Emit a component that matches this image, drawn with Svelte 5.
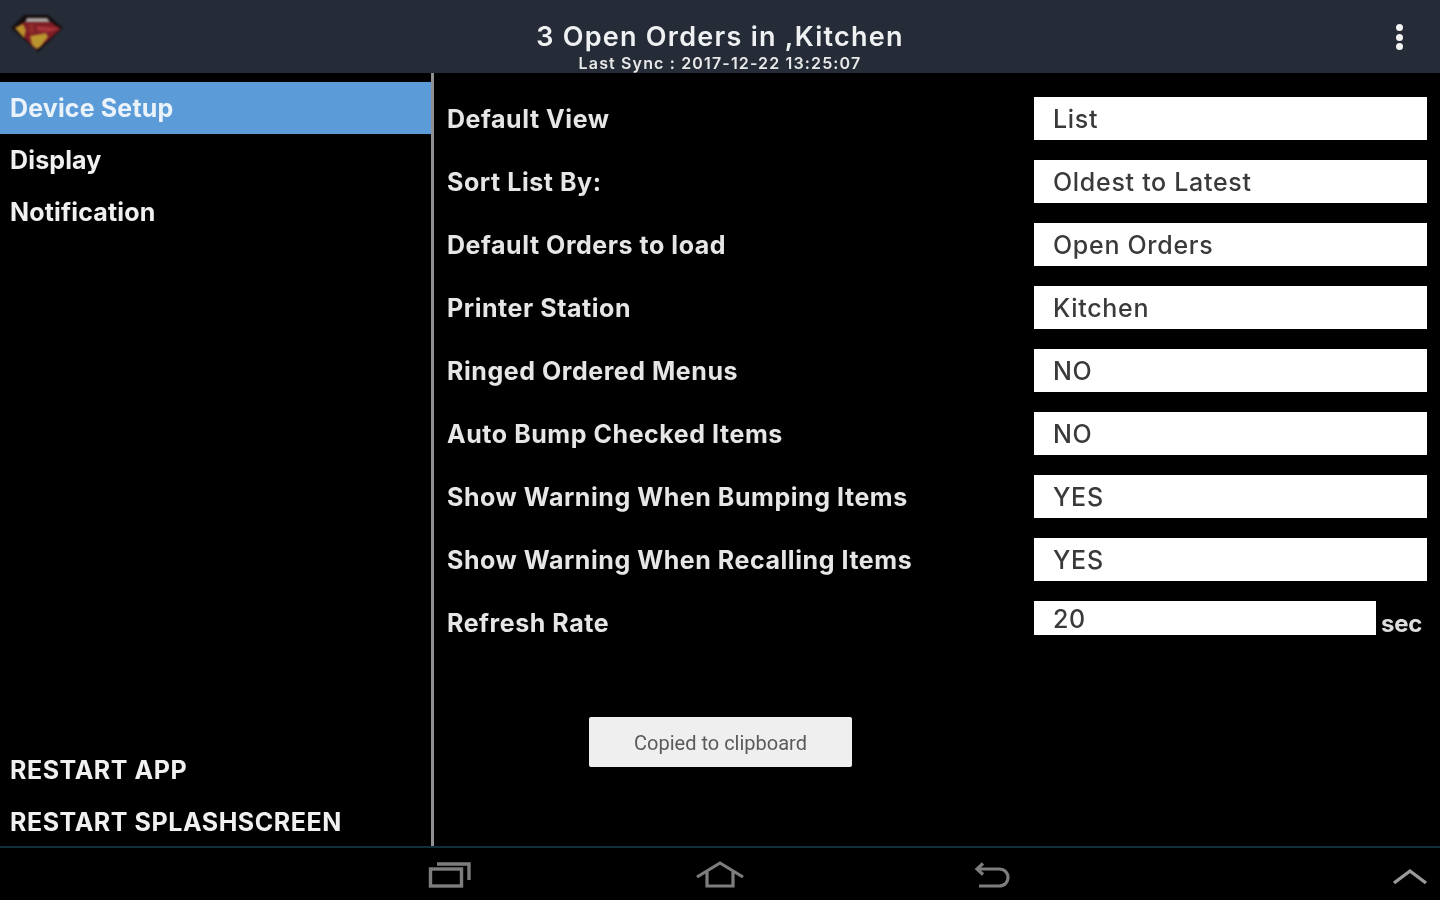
<script>
  const rows = [
    ['Default View', 'List'],
    ['Sort List By:', 'Oldest to Latest'],
    ['Default Orders to load', 'Open Orders'],
    ['Printer Station', 'Kitchen'],
    ['Ringed Ordered Menus', 'NO'],
    ['Auto Bump Checked Items', 'NO'],
    ['Show Warning When Bumping Items', 'YES'],
    ['Show Warning When Recalling Items', 'YES']
  ];
</script>

<div class="screen">
  <header class="top">
    <svg class="logo" width="54" height="40" viewBox="0 0 54 40">
      <path d="M14 2 L38 2 L53 15 L28 39 L1 15 Z" fill="#140d0e"/>
      <path d="M17 5 L37 5 L40 9 L15 10 Z" fill="#a9a3a0"/>
      <path d="M5 15 L14 9 L41 9 L51 16 L28 36 L25 36 Z" fill="#7c1d24"/>
      <path d="M5 15 L13 11 L16 17 L14 25 Z" fill="#b98f2c"/>
      <path d="M20 23 L36 20 L38 24 L31 33 L27 36 L22 32 Z" fill="#b99530"/>
      <path d="M27 13 L50 15 L40 19 L27 18 Z" fill="#a6333a"/>
      <path d="M18 11 L24 11 L24 21 L19 20 Z" fill="#8f2a2a"/>
    </svg>
    <div class="titles">
      <div class="title">3 Open Orders in ,Kitchen</div>
      <div class="sync">Last Sync : 2017-12-22 13:25:07</div>
    </div>
    <div class="dots"><i></i><i></i><i></i></div>
  </header>

  <main class="body">
    <aside class="side">
      <div class="group">
        <div class="item active">Device Setup</div>
        <div class="item">Display</div>
        <div class="item">Notification</div>
      </div>
      <div class="group lower">
        <div class="item caps">RESTART APP</div>
        <div class="item caps">RESTART SPLASHSCREEN</div>
      </div>
    </aside>
    <section class="content">
      {#each rows as r}
        <div class="row">
          <div class="label">{r[0]}</div>
          <div class="value">{r[1]}</div>
        </div>
      {/each}
      <div class="row">
        <div class="label">Refresh Rate</div>
        <div class="rate">
          <div class="value short">20</div>
          <span class="sec">sec</span>
        </div>
      </div>
    </section>
    <div class="toast">Copied to clipboard</div>
  </main>

  <nav class="nav">
    <svg class="ic recent" width="44" height="30" viewBox="0 0 44 30" fill="none" stroke="#7d7d7d" stroke-width="3.4">
      <rect x="2.5" y="10" width="31" height="17"/>
      <path d="M9 5 H41 V21"/>
    </svg>
    <svg class="ic home" width="50" height="30" viewBox="0 0 50 30" fill="none" stroke="#7d7d7d" stroke-width="3.2">
      <path d="M2 16 L25 2 L48 16"/>
      <path d="M12 11 V25 H38 V11"/>
    </svg>
    <svg class="ic back" width="38" height="30" viewBox="0 0 38 30" fill="none" stroke="#7d7d7d" stroke-width="3.2">
      <path d="M3 7 H25 C37 7 37 24 25 24 H5"/>
      <path d="M9 1.5 L3 7 L9 12.5" />
    </svg>
    <svg class="ic up" width="36" height="18" viewBox="0 0 36 18" fill="none" stroke="#9a9a9a" stroke-width="3.4">
      <path d="M2 15 L18 3 L34 15"/>
    </svg>
  </nav>
</div>

<style>
  :global(body) { margin: 0; background: #000; }
  .screen {
    width: 1440px;
    height: 900px;
    display: flex;
    flex-direction: column;
    background: #000;
    color: #f2f2f2;
    font-family: "Inter", "Liberation Sans", sans-serif;
    overflow: hidden;
    filter: blur(0.6px);
  }
  .top {
    height: 73px;
    flex: none;
    background: #252c38;
    display: flex;
    align-items: center;
    justify-content: center;
    position: relative;
  }
  .logo { position: absolute; left: 10px; top: 13px; filter: blur(1px); }
  .titles { text-align: center; padding-top: 14px; }
  .title { font-size: 27px; line-height: 38px; font-weight: 600; letter-spacing: 1.25px; color: #eef0f2; }
  .sync { font-size: 16px; line-height: 14px; font-weight: 600; letter-spacing: 1.15px; color: #e8e8e8; }
  .dots {
    position: absolute; left: 1396px; top: 24px;
    display: flex; flex-direction: column; gap: 2.5px;
  }
  .dots i { width: 7px; height: 7px; border-radius: 50%; background: #f4f4f4; display: block; }

  .body { flex: 1; display: flex; position: relative; min-height: 0; }
  .side {
    width: 431px;
    flex: none;
    border-right: 3px solid #8e9094;
    display: flex;
    flex-direction: column;
    justify-content: space-between;
    padding-top: 9px;
    box-sizing: content-box;
  }
  .lower { margin-bottom: -2px; }
  .item {
    height: 52px;
    line-height: 52px;
    padding-left: 10px;
    font-size: 25px;
    font-weight: 700;
    letter-spacing: 0.15px;
    color: #f0f0f0;
  }
  .caps { letter-spacing: 0.55px; }
  .active { background: #5b9bd8; color: #eaf2fa; }
  .content {
    flex: 1;
    padding: 24px 13px 0 13px;
    display: flex;
    flex-direction: column;
    gap: 20px;
  }
  .row {
    height: 43px;
    display: flex;
    align-items: center;
    justify-content: space-between;
  }
  .label { font-size: 25px; font-weight: 700; letter-spacing: 0.55px; color: #e6e6e6; }
  .value {
    width: 393px;
    height: 43px;
    box-sizing: border-box;
    background: #fff;
    color: #3a3a3a;
    font-size: 25px;
    font-weight: 500;
    line-height: 45px;
    padding-left: 19px;
    letter-spacing: 0.7px;
  }
  .rate { width: 393px; display: flex; align-self: flex-start; }
  .value.short { width: 342px; height: 34px; line-height: 36px; flex: none; }
  .sec { font-size: 24px; font-weight: 700; letter-spacing: -0.2px; color: #dcdcdc; padding: 8px 0 0 5px; line-height: 30px; }
  .toast {
    position: absolute;
    left: 589px;
    top: 644px;
    width: 263px;
    height: 50px;
    background: #efefef;
    color: #5a5a5a;
    border-radius: 2px;
    text-align: center;
    font-size: 20px;
    line-height: 52px;
    font-family: "Roboto", sans-serif;
  }
  .nav {
    height: 54px;
    flex: none;
    border-top: 2px solid #12303c;
    position: relative;
    box-sizing: border-box;
    background: #000;
  }
  .ic { position: absolute; }
  .recent { left: 428px; top: 11px; }
  .home { left: 695px; top: 13px; }
  .back { left: 974px; top: 14px; }
  .up { left: 1392px; top: 20px; }
</style>
